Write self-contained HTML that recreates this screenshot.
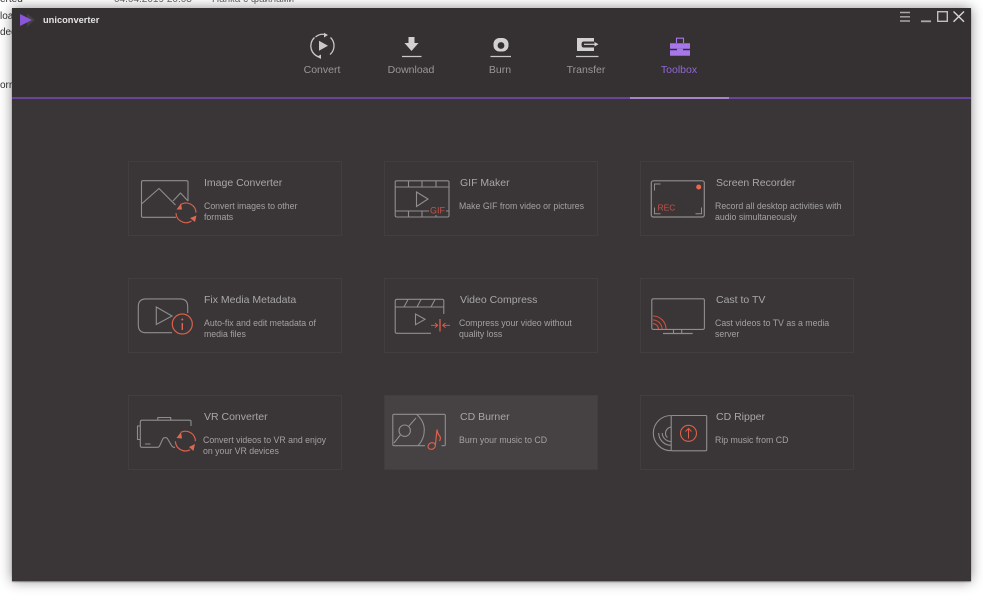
<!DOCTYPE html>
<html><head><meta charset="utf-8">
<style>
html,body{margin:0;padding:0;width:983px;height:600px;overflow:hidden;background:#fff;font-family:"Liberation Sans","Noto Sans CJK SC",sans-serif}
.bg{position:absolute;font-size:10px;color:#333;white-space:nowrap;line-height:12px}
#win{position:absolute;left:12px;top:8px;width:959px;height:573px;background:#3a3637;box-shadow:0 0 12px rgba(0,0,0,.45),0 1px 1px rgba(0,0,0,.4)}
#head{position:absolute;left:12px;top:8px;width:959px;height:89px;background:#353132}
#l1{position:absolute;left:12px;top:97px;width:959px;height:2px;background:#68459a}
#l2{position:absolute;left:630px;top:97px;width:99px;height:2px;background:#a583cf}
.card{position:absolute;width:212px;height:73px;border:1px solid #423e3f;background:#3a3637}
.hi{background:#464243}
.t{position:absolute;font-size:10.5px;line-height:14px;color:#a8a6a6;white-space:nowrap}
.d{position:absolute;font-size:8.75px;line-height:10.5px;color:#a3a1a2;white-space:nowrap}
.n{position:absolute;top:63px;font-size:10.5px;line-height:14px;color:#989697;white-space:nowrap;text-align:center;width:80px}
svg{position:absolute;left:0;top:0}
</style></head><body>
<div class="bg" style="left:0;top:-6px">erted</div>
<div class="bg" style="left:114px;top:-6px;color:#666">04.04.2019 20:03</div>
<div class="bg" style="left:212px;top:-6px;color:#666">Папка с файлами</div>
<div class="bg" style="left:0;top:11px">load</div>
<div class="bg" style="left:0;top:27px">ded</div>
<div class="bg" style="left:0;top:80px">orr</div>
<div id="win"></div><div id="head"></div><div id="l1"></div><div id="l2"></div>

<div class="card" style="left:128px;top:161px"></div>
<div class="card" style="left:384px;top:161px"></div>
<div class="card" style="left:640px;top:161px"></div>
<div class="card" style="left:128px;top:278px"></div>
<div class="card" style="left:384px;top:278px"></div>
<div class="card" style="left:640px;top:278px"></div>
<div class="card" style="left:128px;top:395px"></div>
<div class="card hi" style="left:384px;top:395px"></div>
<div class="card" style="left:640px;top:395px"></div>

<div style="position:absolute;left:43px;top:14px;font-size:9.3px;line-height:12px;font-weight:bold;color:#e4e2e3">uniconverter</div>

<div class="n" style="left:282px">Convert</div>
<div class="n" style="left:371px">Download</div>
<div class="n" style="left:460px">Burn</div>
<div class="n" style="left:546px">Transfer</div>
<div class="n" style="left:639px;color:#9068d2">Toolbox</div>

<div class="t" style="left:204px;top:176px">Image Converter</div>
<div class="d" style="left:204px;top:201px">Convert images to other<br>formats</div>
<div class="t" style="left:460px;top:176px">GIF Maker</div>
<div class="d" style="left:459px;top:201px">Make GIF from video or pictures</div>
<div class="t" style="left:716px;top:176px">Screen Recorder</div>
<div class="d" style="left:715px;top:201px">Record all desktop activities with<br>audio simultaneously</div>

<div class="t" style="left:204px;top:293px">Fix Media Metadata</div>
<div class="d" style="left:204px;top:318px">Auto-fix and edit metadata of<br>media files</div>
<div class="t" style="left:460px;top:293px">Video Compress</div>
<div class="d" style="left:459px;top:318px">Compress your video without<br>quality loss</div>
<div class="t" style="left:716px;top:293px">Cast to TV</div>
<div class="d" style="left:715px;top:318px">Cast videos to TV as a media<br>server</div>

<div class="t" style="left:204px;top:410px">VR Converter</div>
<div class="d" style="left:203px;top:435px">Convert videos to VR and enjoy<br>on your VR devices</div>
<div class="t" style="left:460px;top:410px">CD Burner</div>
<div class="d" style="left:459px;top:435px">Burn your music to CD</div>
<div class="t" style="left:716px;top:410px">CD Ripper</div>
<div class="d" style="left:715px;top:435px">Rip music from CD</div>

<svg width="983" height="600" viewBox="0 0 983 600" fill="none">
<!-- logo -->
<path d="M27 13.5L35 20L27 27Z" fill="#454142"/>
<path d="M20 14L32 20L20 26Z" fill="#8a55d8"/>

<!-- window controls -->
<g stroke="#aaa8a8" stroke-width="1.4">
<path d="M900 12.5H910M900 16.8H910M900 21H910"/>
<path d="M921 21.3H931" stroke-width="1.8"/>
<rect x="937.7" y="11.7" width="9.6" height="9.6" stroke="#c0bebe"/>
<path d="M953.5 11.5L964 21.7M964 11.5L953.5 21.7" stroke="#d8d6d6"/>
</g>

<!-- nav: convert -->
<g stroke="#c9c7c7" stroke-width="1.3">
<path d="M315.5 37A11.5 11.5 0 0 1 325 34.5"/>
<path d="M330.5 37.5A11.5 11.5 0 0 1 330 54.5"/>
<path d="M320 57.2A11.5 11.5 0 0 1 314.5 37.5"/>
</g>
<path d="M324 32.7L328 35L324 37.5Z M321 54.5L317 56.8L321 59Z" fill="#c9c7c7"/>
<path d="M319 40.7L328 45.8L319 50.8Z" fill="#c9c7c7"/>
<!-- download -->
<path d="M408.5 37H414.5V43H418.5L411.5 51L404.5 43H408.5Z" fill="#d2d0d0"/>
<path d="M402 56.5H421.5" stroke="#c9c7c7" stroke-width="1.2"/>
<!-- burn -->
<rect x="493.5" y="38" width="15" height="13.5" rx="6" fill="#d2d0d0"/>
<circle cx="501" cy="45.5" r="3.4" fill="#353132"/>
<path d="M490.5 56.5H511" stroke="#c9c7c7" stroke-width="1.2"/>
<!-- transfer -->
<path d="M577 38H594V41.5H583.5Q581.5 41.5 581.5 44.5Q581.5 47.5 583.5 47.5H594V51H577Z" fill="#d2d0d0"/>
<path d="M584 44.3H596" stroke="#d2d0d0" stroke-width="1.2"/>
<path d="M594.5 42L598.5 44.3L594.5 46.5Z" fill="#d2d0d0"/>
<path d="M576 56.5H598.5" stroke="#c9c7c7" stroke-width="1.2"/>
<!-- toolbox -->
<path d="M676.5 43V38.2H683.5V43" stroke="#a676ea" stroke-width="1.1"/>
<path d="M670 43.3H690V48.7H670Z" fill="#a676ea"/>
<path d="M670 50.3H677V48.8H683V50.3H690V55.7H670Z" fill="#a676ea"/>

<!-- image converter -->
<g stroke="#8f8d8d" stroke-width="1.1" stroke-linejoin="round">
<path d="M176 217.3H143Q141.5 217.3 141.5 216V182Q141.5 180.7 143 180.7H186.5Q188 180.7 188 182V201"/>
<path d="M141.5 204L159 188.5L175.5 205"/>
<path d="M173 201L180.5 193L188 201"/>
</g>
<path d="M180.5 204.7A10 10 0 0 1 196 212.7M191.5 221A10 10 0 0 1 176 213" stroke="#d9604a" stroke-width="1.1"/>
<path d="M176.5 209.5L181 203.5L182 209.5Z M196.5 215.5L195 222L190 218Z" fill="#e0674f"/>

<!-- gif maker -->
<g stroke="#8f8d8d" stroke-width="1.1">
<rect x="395.2" y="180.8" width="53.8" height="36.2" rx="1.5"/>
<path d="M395 187H449M395 211H449M408.5 181V187M422 181V187M436 181V187M408.5 211V217M422 211V217M436 211V217"/>
<path d="M416.5 192L428 199L416.5 206.5Z"/>
</g>
<rect x="429" y="205" width="17" height="10" fill="#3a3637"/>
<text x="430" y="213.4" font-family="Liberation Sans" font-size="9" fill="#c8524a">GIF</text>

<!-- screen recorder -->
<rect x="651.3" y="180.8" width="53" height="36.2" rx="2" stroke="#8f8d8d" stroke-width="1.2"/>
<path d="M654.5 190.5V184H660.5M654.5 207.5V213.8H660.5M701.5 207.5V213.8H695.5" stroke="#8f8d8d" stroke-width="1"/>
<circle cx="698.7" cy="187" r="2.5" fill="#f0644e"/>
<text x="657.5" y="210.5" font-family="Liberation Sans" font-size="8.5" fill="#c4524a">REC</text>

<!-- fix metadata -->
<g stroke="#8f8d8d" stroke-width="1.1">
<path d="M172 332.7H146Q138.3 332.7 138.3 325V306.5Q138.3 298.9 146 298.9H180Q187.7 298.9 187.7 306.5V313"/>
<path d="M156.3 307L172 316L156.3 324.5Z"/>
</g>
<circle cx="182.3" cy="324" r="10" stroke="#d9604a" stroke-width="1.2"/>
<path d="M182.3 323V330" stroke="#e0674f" stroke-width="1.4"/>
<circle cx="182.3" cy="319.5" r="1" fill="#e0674f"/>

<!-- video compress -->
<g stroke="#8f8d8d" stroke-width="1.1">
<path d="M431 333.3H397Q395.2 333.3 395.2 331.5V301Q395.2 299.3 397 299.3H442Q443.8 299.3 443.8 301V314"/>
<path d="M395 307H444M404 307L408 299.5M417 307L421 299.5M431 307L435 299.5"/>
<path d="M415.5 314L425 319.3L415.5 324.7Z"/>
</g>
<path d="M440 319V331.5" stroke="#e0604a" stroke-width="1.3"/>
<path d="M431 325.3H437.5M435 323L437.7 325.3L435 327.6M450 325.3H443M445.5 323L442.7 325.3L445.5 327.6" stroke="#d9604a" stroke-width=".9"/>

<!-- cast -->
<g stroke="#8f8d8d" stroke-width="1.1">
<rect x="651.8" y="298.8" width="52.6" height="30.6" rx="1.5"/>
<path d="M663 333.5H692.7" stroke-width="1.3"/>
<path d="M673.5 329.5V333M681.7 329.5V333"/>
</g>
<path d="M653 316A13 13 0 0 1 666 329M653 320A9 9 0 0 1 662 329M653 323.7A5.5 5.5 0 0 1 658.5 329" stroke="#c9503f" stroke-width="1.1"/>

<!-- vr -->
<g stroke="#8f8d8d" stroke-width="1.1" stroke-linejoin="round">
<path d="M191 426V421.5Q191 420.2 189.5 420.2H142Q140.3 420.2 140.3 422V445.5Q140.3 447.3 142 447.3H157.5Q159 447.3 160 445L163 438.5Q163.5 437.7 165 437.7H166Q167 437.7 167.7 439L171.5 445.5Q172.5 447.3 174 447.3H175"/>
<path d="M140 426H137.5V439.5H140"/>
<path d="M157.8 420V417.5H170.7V420"/>
<path d="M145 444H150.5" stroke-width="1"/>
</g>
<path d="M181 432.3A10 10 0 0 1 195.4 441.3M190 449.8A10 10 0 0 1 175.4 441.3" stroke="#d9604a" stroke-width="1.2"/>
<path d="M176.5 438L181 432L182 438.5Z M195 444L193.5 451L189 447Z" fill="#e0674f"/>

<!-- cd burner -->
<g stroke="#8f8d8d" stroke-width="1.1">
<path d="M425 445.7H394Q392.8 445.7 392.8 444.5V415.5Q392.8 414.3 394 414.3H444Q445.3 414.3 445.3 415.5V444.5Q445.3 445.7 444 445.7H441.5"/>
<path d="M416.5 414.3Q424.3 421 424.3 430Q424.3 439 418 445.7"/>
<circle cx="404.7" cy="430.7" r="5.7"/>
<path d="M416 418L409 426M394 443L400.3 435"/>
</g>
<g stroke="#d9604a" stroke-width="1.2">
<ellipse cx="431.7" cy="446" rx="3.8" ry="3.2" transform="rotate(-25 431.7 446)"/>
<path d="M435.4 445L437 429.5Q437.5 434 440 436.5Q441 438.5 439.5 441"/>
</g>

<!-- cd ripper -->
<g stroke="#8f8d8d" stroke-width="1.1">
<rect x="671.2" y="415.5" width="35.5" height="35.3" rx="1"/>
<path d="M671 415.5A17.7 17.7 0 0 0 653.3 433.1A17.7 17.7 0 0 0 671 450.7"/>
<path d="M671 445.3A12.3 12.3 0 0 1 658.7 433"/>
<path d="M671 441.5A8.8 8.8 0 0 1 662.2 433"/>
<path d="M671 427A6.5 6.5 0 0 0 665.5 433.5Q665.5 436 667.5 437.5"/>
</g>
<circle cx="688.5" cy="433.3" r="8" stroke="#d9604a" stroke-width="1.1"/>
<path d="M688.5 438.5V428.5M685.5 431.5L688.5 428.5L691.5 431.5" stroke="#d9604a" stroke-width="1"/>
</svg>
</body></html>
